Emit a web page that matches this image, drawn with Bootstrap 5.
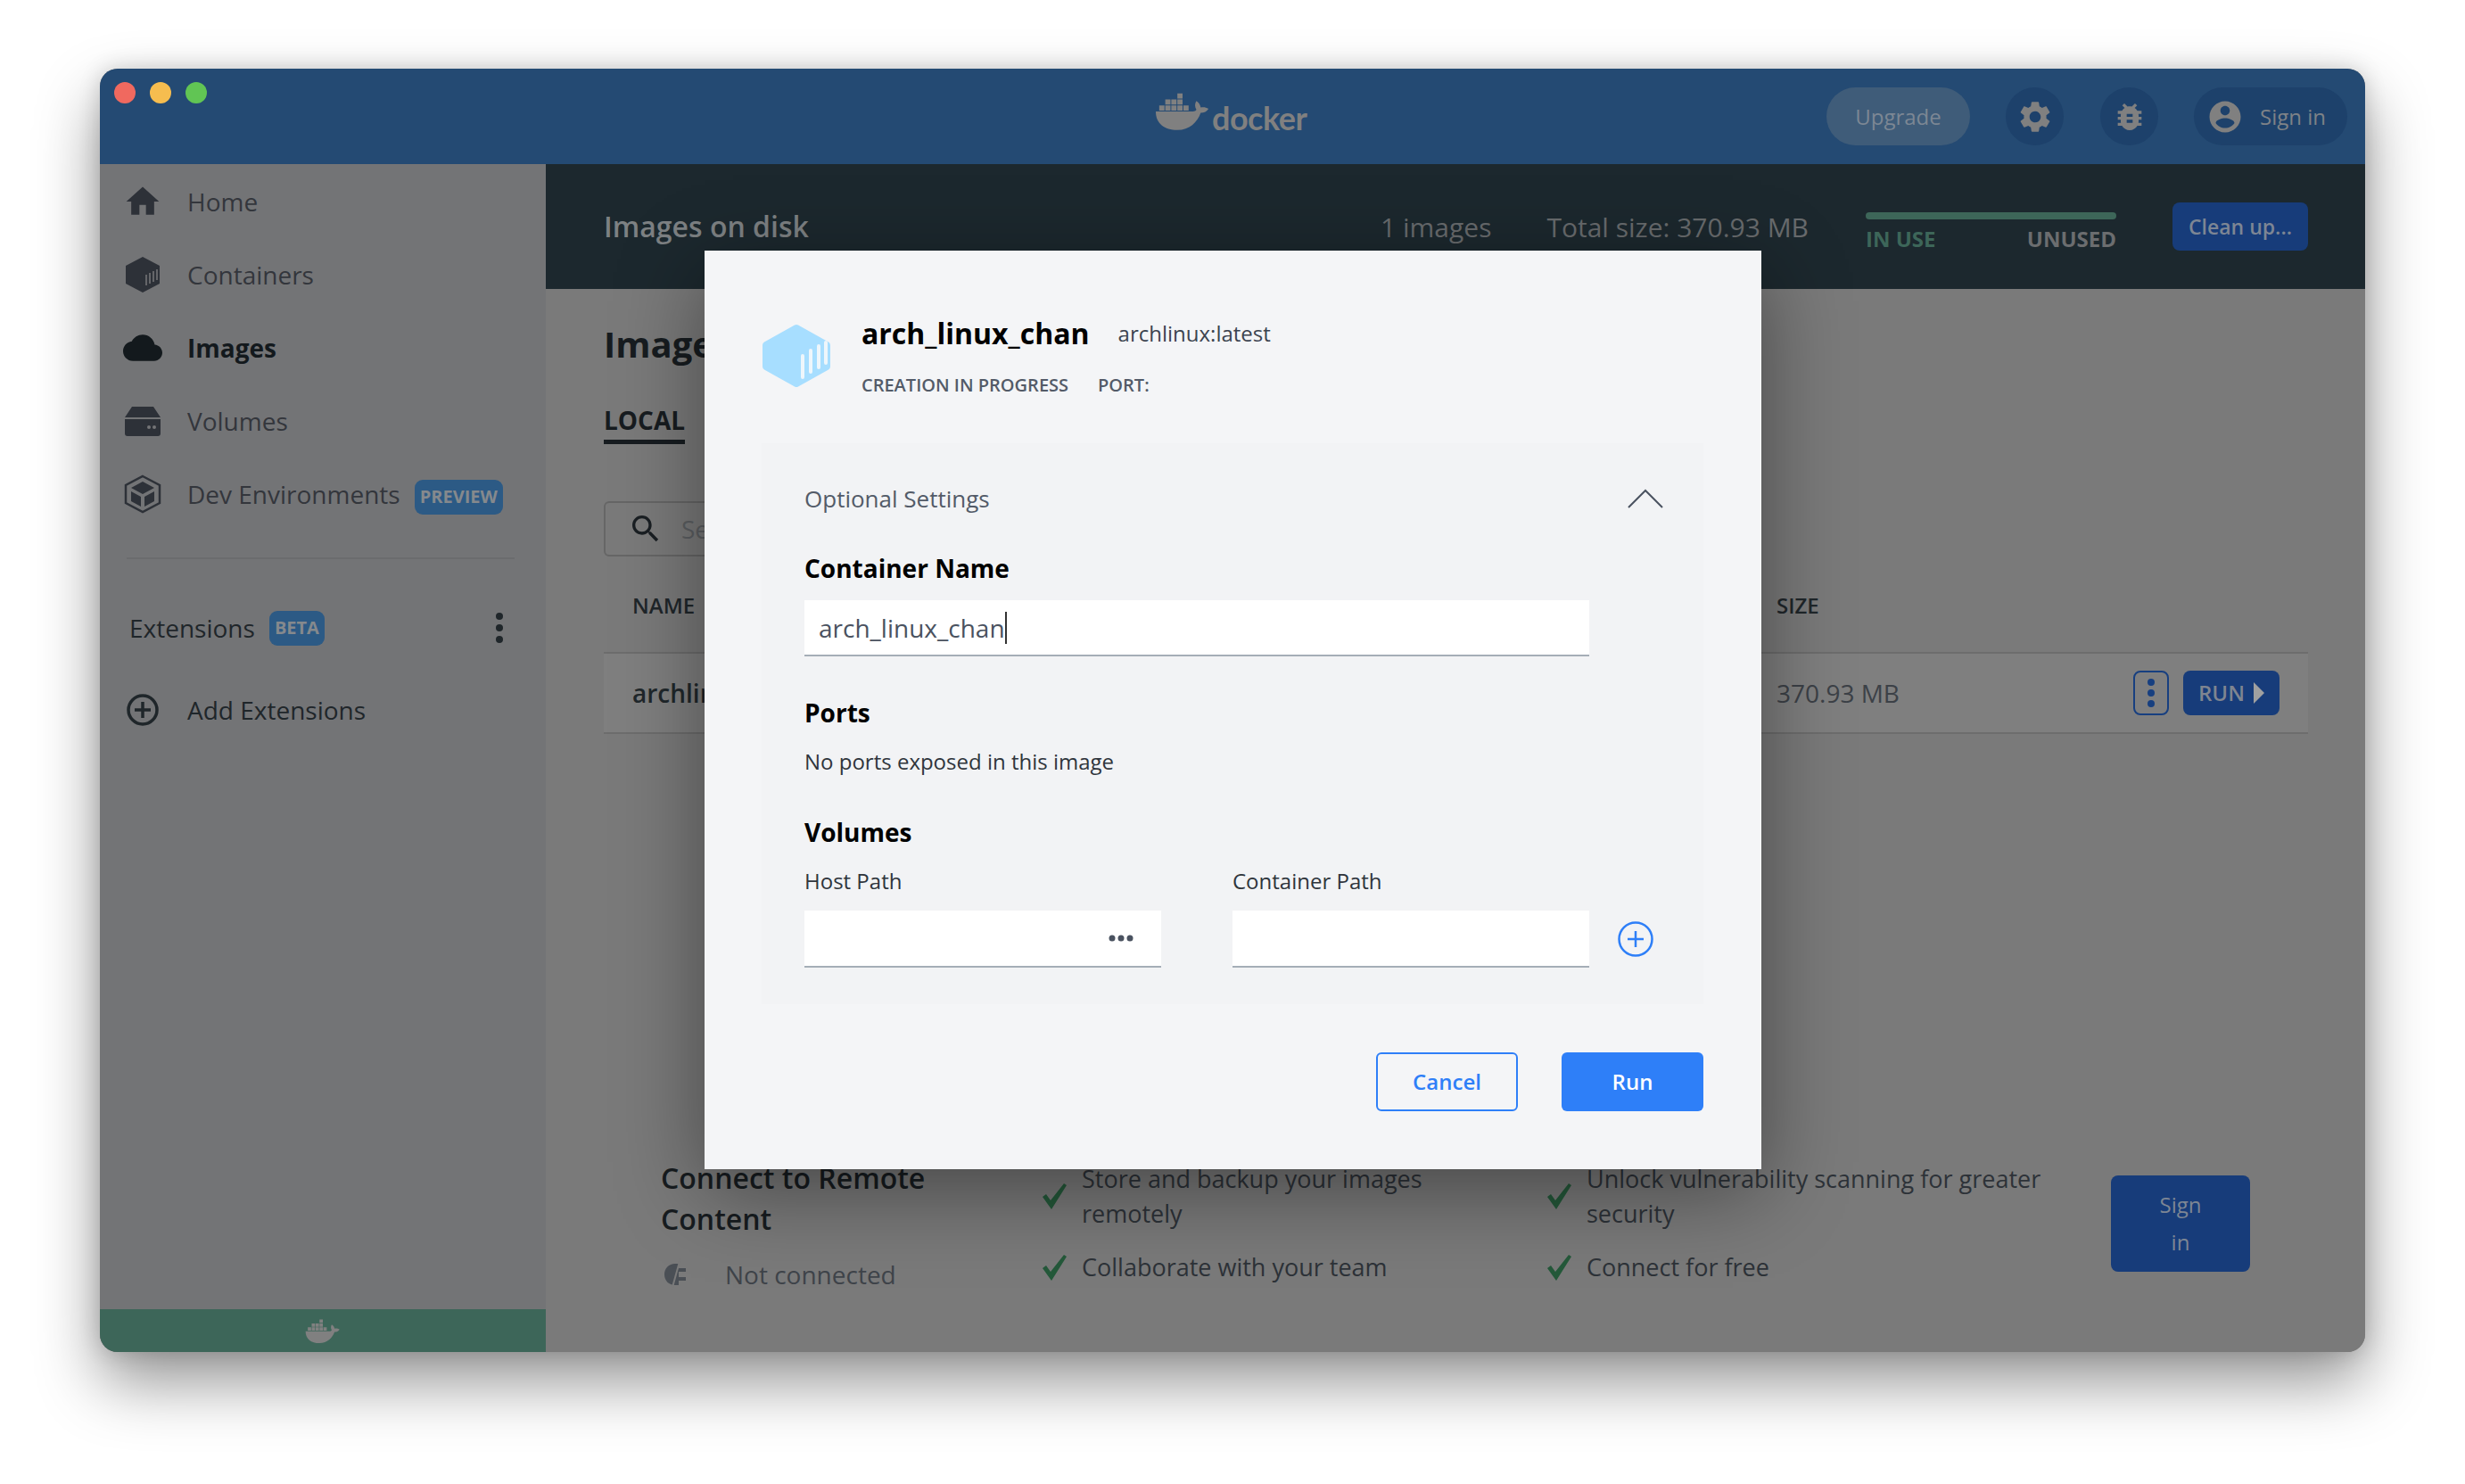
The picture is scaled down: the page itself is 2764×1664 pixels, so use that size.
<!DOCTYPE html>
<html lang="en">
<head>
  <meta charset="UTF-8" />
  <title>Docker Desktop</title>
  <link href="https://cdn.jsdelivr.net/npm/bootstrap@5.3.3/dist/css/bootstrap.min.css" rel="stylesheet">
  <style>
    body { background: #fff; font-family: "Open Sans", sans-serif; margin: 0; width: 2764px; height: 1664px; overflow: hidden; padding: 77px 112px 0; }
    .app-window { position: relative; width: 2540px; height: 1439px; border-radius: 20px; overflow: visible; box-shadow: 0 34px 70px rgba(0,0,0,.42), 0 0 24px rgba(0,0,0,.16); background: #7a7a7a; }
    .app-clip { width: 100%; height: 100%; border-radius: 20px; overflow: hidden; display: flex; flex-direction: column; }

    .top-strip { height: 107px; background: #244a73; padding-right: 20px; position: relative; flex: none; }
    .traffic { position: absolute; left: 16px; top: 15px; gap: 16px; }
    .traffic span { width: 24px; height: 24px; border-radius: 50%; display: block; }
    .logo-wrap { position: absolute; left: 1183px; top: 24px; color: #808080; gap: 2px; }
    .logo-text { font-family: "Lato", sans-serif; font-size: 36px; font-weight: 700; line-height: 1; letter-spacing: -.5px; margin-top: 13px; }
    .pill-btn { height: 65px; border-radius: 33px; background: #1d416b; color: #7e8287; font-size: 24px; gap: 18px; }
    .pill-upgrade { width: 161px; background: #3f5c79; color: #7c8794; }
    .pill-round { width: 65px; }
    .pill-sign { width: 172px; padding-left: 14px; }

    .side-col { width: 500px; background: #737476; flex: none; display: flex; flex-direction: column; padding-top: 1px; }
    .side-item { height: 82px; padding-left: 26px; color: #33363c; font-size: 28px; }
    .side-item svg { width: 44px; height: 44px; margin-right: 28px; flex: none; }
    .side-item.is-on { color: #13191d; font-weight: 700; }
    .tag-blue { background: #2c5a85; color: #85898d; font-weight: 700; font-size: 20px; border-radius: 9px; height: 39px; padding: 0 6px; display: inline-flex; align-items: center; margin-left: 16px; }
    .tag-low { position: relative; top: 3px; }
    .side-rule { height: 2px; background: #6b6c6e; margin: 30px 35px 0 30px; }
    .ext-row { height: 60px; margin-top: 47px; padding: 0 47px 0 33px; color: #1f262a; font-size: 28px; }
    .add-row { height: 60px; margin-top: 32px; padding-left: 26px; color: #1f262a; font-size: 28px; }
    .add-row svg { width: 44px; height: 44px; margin-right: 28px; }
    .green-foot { height: 48px; background: #3d6659; margin-top: auto; flex: none; }

    .main-col { background: #7a7a7a; min-width: 0; position: relative; }
    .disk-head { height: 140px; background: #1c282e; padding: 0 64px 0 65px; flex: none; color: #686b6d; font-size: 30px; }
    .disk-title { color: #7d8183; font-size: 32px; font-weight: 600; }
    .disk-meter { width: 281px; margin: 14px 63px 0 64px; }
    .disk-bar { height: 8px; border-radius: 4px; background: #3d6659; margin-bottom: 6px; }
    .disk-labels { font-size: 24px; font-weight: 700; line-height: 32px; color: #6b6d6f; }
    .btn-cleanup { width: 152px; height: 54px; padding: 0; background: #173c7a; border: 0; border-radius: 8px; color: #7d8694; font-size: 23px; font-weight: 600; }
    .main-body { padding: 0 64px 0 65px; }
    .page-title { font-size: 40px; font-weight: 700; color: #171c20; line-height: 54px; margin: 35px 0 0; }
    .local-tab { display: inline-block; font-size: 28px; font-weight: 700; color: #171c20; line-height: 38px; margin-top: 39px; padding-bottom: 3px; border-bottom: 5px solid #171c20; }
    .search-box { width: 620px; height: 62px; margin-top: 64px; border: 2px solid #666; border-radius: 6px; padding-left: 25px; color: #5c5f62; font-size: 28px; gap: 20px; }
    .col-heads { height: 109px; padding: 2px 0 0 32px; color: #1f262a; font-weight: 600; font-size: 24px; border-bottom: 2px solid #6d6d6d; position: relative; }
    .img-row { height: 90px; background: #7f7f7f; border-bottom: 2px solid #6d6d6d; padding-left: 32px; color: #20272b; font-size: 28px; font-weight: 600; position: relative; }
    .at-size { position: absolute; left: 1315px; }
    .img-row .at-size { color: #3c4147; font-weight: 400; }
    .row-actions { position: absolute; right: 32px; gap: 16px; }
    .btn-kebab { width: 40px; height: 50px; padding: 0; border: 2px solid #173f80; border-radius: 8px; background: transparent; color: #173f80; }
    .btn-rowrun { width: 108px; height: 50px; padding: 0; border: 0; border-radius: 8px; background: #173c7a; color: #7f8590; font-size: 24px; font-weight: 600; gap: 10px; }
    .promo { position: absolute; left: 65px; top: 1134px; width: 1911px; color: #2d3238; font-size: 27px; }
    .promo-title { font-size: 32px; font-weight: 600; line-height: 46px; color: #171c20; width: 340px; margin: -20px 0 0 64px; }
    .promo-list { position: absolute; top: -16px; width: 564px; line-height: 39px; }
    .promo-list.is-narrow { width: 440px; }
    .promo-check { display: flex; gap: 14px; align-items: center; margin-bottom: 21px; }
    .promo-check svg { flex: none; width: 34px; height: 34px; }
    .promo-conn { color: #3f444a; font-size: 28px; margin: 18px 0 0 64px; gap: 36px; }
    .btn-signbig { position: absolute; left: 1690px; top: 0; width: 156px; height: 108px; padding: 0; background: #173c7a; border: 0; border-radius: 8px; color: #7d8694; font-size: 24px; line-height: 42px; }

    .run-dialog { position: absolute; left: 678px; top: 204px; width: 1185px; height: 1030px; background: #f4f5f7; box-shadow: 0 24px 90px rgba(0,0,0,.42); padding: 71px 65px 0 64px; color: #000; }
    .dlg-hex { width: 80px; height: 72px; margin: 0 33px 0 -1px; flex: none; }
    .dlg-name { font-size: 32px; font-weight: 700; line-height: 44px; }
    .dlg-image { font-size: 24px; color: #3c4450; margin-left: 32px; }
    .dlg-sub { font-size: 20px; font-weight: 600; color: #535b68; line-height: 28px; margin-top: 22px; gap: 33px; }
    .opt-panel { height: 629px; margin-top: 51px; background: #f2f3f5; padding: 38px 44px 0 48px; }
    .opt-head { color: #535b68; font-size: 26px; line-height: 48px; }
    .opt-label { font-size: 28px; font-weight: 700; line-height: 38px; color: #000; }
    .flat-input { background: #fff; border: 0; border-bottom: 2px solid #a5aeb7; border-radius: 0; height: 63px; font-size: 28px; color: #4a5260; padding: 0 16px; box-shadow: none; }
    .caret-mark { display: inline-block; width: 2px; height: 36px; background: #333; vertical-align: middle; }
    .dlg-text { font-size: 24px; color: #2f353c; line-height: 32px; }
    .btn-cancel, .btn-go { width: 159px; height: 66px; padding: 0; border-radius: 6px; font-size: 24px; font-weight: 600; }
    .btn-cancel { background: transparent; border: 2px solid #2e7ff8; color: #2e7ff8; margin-right: 49px; }
    .btn-go { background: #2e7ff8; border: 0; color: #fff; }
    .dlg-foot { margin-top: 54px; }
  </style>
</head>
<body>
  <svg width="0" height="0" class="position-absolute">
    <symbol id="whale" viewBox="0 0 64 46">
      <path fill="currentColor" d="M5 17h6v6H5zM12 17h6v6h-6zM19 17h6v6h-6zM26 17h6v6h-6zM33 17h6v6h-6zM12 10h6v6h-6zM19 10h6v6h-6zM26 10h6v6h-6zM26 3h6v6h-6z"/>
      <path fill="currentColor" d="M1 24h43c2 0 3-.5 4-2-2-3-2-7 0-10 3 2 4.500 4.500 5 7.500 3-1 6-.5 9 1.500-2 3.500-5 4.500-9 4.500-4 11-13 20-27 20C11 45.500 1 38 1 24z"/>
    </symbol>
  </svg>

  <div class="app-window">
    <div class="app-clip">
      <!-- title bar -->
      <div class="top-strip d-flex align-items-center justify-content-end">
        <div class="traffic d-flex">
          <span style="background:#f0695f"></span><span style="background:#f6bd4f"></span><span style="background:#61c554"></span>
        </div>
        <div class="logo-wrap d-flex">
          <svg width="62" height="46"><use href="#whale"/></svg>
          <span class="logo-text">docker</span>
        </div>
        <div class="pill-btn pill-upgrade d-flex align-items-center justify-content-center me-4 ms-0">Upgrade</div>
        <div class="pill-btn pill-round d-flex align-items-center justify-content-center" style="margin-right:41px;margin-left:16px">
          <svg width="42" height="42" viewBox="0 0 24 24" fill="#808080"><path d="M19.14 12.94c.04-.3.06-.61.06-.94 0-.32-.02-.64-.07-.94l2.03-1.58c.18-.14.23-.41.12-.61l-1.92-3.32c-.12-.22-.37-.29-.59-.22l-2.39.96c-.5-.38-1.03-.7-1.62-.94l-.36-2.54c-.04-.24-.24-.41-.48-.41h-3.84c-.24 0-.43.17-.47.41l-.36 2.54c-.59.24-1.13.57-1.62.94l-2.39-.96c-.22-.08-.47 0-.59.22L2.74 8.87c-.12.21-.08.47.12.61l2.03 1.58c-.05.3-.09.63-.09.94s.02.64.07.94l-2.03 1.58c-.18.14-.23.41-.12.61l1.92 3.32c.12.22.37.29.59.22l2.39-.96c.5.38 1.03.7 1.62.94l.36 2.54c.05.24.24.41.48.41h3.84c.24 0 .44-.17.47-.41l.36-2.54c.59-.24 1.13-.56 1.62-.94l2.39.96c.22.08.47 0 .59-.22l1.92-3.32c.12-.22.07-.47-.12-.61l-2.01-1.58zM12 15.600c-1.980 0-3.600-1.620-3.600-3.600s1.620-3.600 3.600-3.600 3.600 1.620 3.600 3.600-1.620 3.600-3.600 3.600z"/></svg>
        </div>
        <div class="pill-btn pill-round d-flex align-items-center justify-content-center" style="margin-right:40px">
          <svg width="40" height="40" viewBox="0 0 24 24" fill="#808080"><path d="M20 8h-2.810c-.45-.78-1.070-1.450-1.820-1.960L17 4.410 15.590 3l-2.170 2.170C12.960 5.060 12.490 5 12 5c-.49 0-.96.06-1.410.17L8.410 3 7 4.410l1.620 1.630C7.880 6.550 7.260 7.220 6.810 8H4v2h2.090c-.05.33-.09.66-.09 1v1H4v2h2v1c0 .34.04.67.09 1H4v2h2.810c1.040 1.790 2.970 3 5.190 3s4.150-1.210 5.190-3H20v-2h-2.090c.05-.33.09-.66.09-1v-1h2v-2h-2v-1c0-.34-.04-.67-.09-1H20V8zm-6 8h-4v-2h4v2zm0-4h-4v-2h4v2z"/></svg>
        </div>
        <div class="pill-btn pill-sign d-flex align-items-center">
          <svg width="42" height="42" viewBox="0 0 24 24" fill="#808080"><path d="M12 2C6.480 2 2 6.480 2 12s4.480 10 10 10 10-4.480 10-10S17.520 2 12 2zm0 3c1.660 0 3 1.340 3 3s-1.340 3-3 3-3-1.340-3-3 1.340-3 3-3zm0 14.200c-2.500 0-4.710-1.280-6-3.220.03-1.990 4-3.080 6-3.080 1.990 0 5.970 1.090 6 3.080-1.290 1.940-3.500 3.220-6 3.220z"/></svg>
          <span>Sign in</span>
        </div>
      </div>

      <div class="d-flex flex-grow-1" style="min-height:0">
        <!-- sidebar -->
        <div class="side-col">
          <div class="side-item d-flex align-items-center">
            <svg viewBox="0 0 24 24" fill="#2d3138"><path d="M10 20v-6h4v6h5v-8h3L12 3 2 12h3v8z"/></svg>Home
          </div>
          <div class="side-item d-flex align-items-center">
            <svg viewBox="0 0 44 44"><path fill="#2d3138" d="M22 2l19 10v20L22 42 3 32V12z"/><path stroke="#737476" stroke-width="1.600" d="M26 34V22M30 32V20M34 30V18M38 28V16"/></svg>Containers
          </div>
          <div class="side-item is-on d-flex align-items-center">
            <svg viewBox="0 0 24 24" fill="#13191d"><path d="M19.350 10.040C18.670 6.590 15.640 4 12 4 9.110 4 6.600 5.640 5.350 8.040 2.340 8.360 0 10.910 0 14c0 3.310 2.690 6 6 6h13c2.760 0 5-2.240 5-5 0-2.640-2.050-4.780-4.650-4.960z"/></svg>Images
          </div>
          <div class="side-item d-flex align-items-center">
            <svg viewBox="0 0 44 44"><path fill="#2d3138" d="M10 6h24l8 12H2zM2 20h40v16a3 3 0 0 1-3 3H5a3 3 0 0 1-3-3z"/><circle cx="29" cy="29" r="2" fill="#737476"/><circle cx="35" cy="29" r="2" fill="#737476"/></svg>Volumes
          </div>
          <div class="side-item d-flex align-items-center">
            <svg viewBox="0 0 44 44" fill="none" stroke="#2d3138" stroke-width="2.500"><path d="M22 2l19 10v20L22 42 3 32V12z"/><path fill="#2d3138" stroke="none" d="M22 8l13 7-13 7-13-7zM9 19l11 6v11l-11-6zM35 19l-11 6v11l11-6z"/></svg>Dev Environments<span class="tag-blue tag-low">PREVIEW</span>
          </div>
          <div class="side-rule"></div>
          <div class="ext-row d-flex align-items-center">
            <span>Extensions</span><span class="tag-blue">BETA</span>
            <svg class="ms-auto" width="10" height="40" viewBox="0 0 10 40" fill="#1f262a"><circle cx="5" cy="7" r="4"/><circle cx="5" cy="20" r="4"/><circle cx="5" cy="33" r="4"/></svg>
          </div>
          <div class="add-row d-flex align-items-center">
            <svg viewBox="0 0 44 44" fill="none" stroke="#1f262a" stroke-width="3.500"><circle cx="22" cy="22" r="16"/><path d="M22 13v18M13 22h18"/></svg>Add Extensions
          </div>
          <div class="green-foot d-flex align-items-center justify-content-center" style="color:#808080">
            <svg width="40" height="30"><use href="#whale"/></svg>
          </div>
        </div>

        <!-- main area -->
        <div class="main-col flex-grow-1">
          <div class="disk-head d-flex align-items-center">
            <span class="disk-title">Images on disk</span>
            <span class="ms-auto">1 images</span>
            <span style="margin-left:62px">Total size: 370.93 MB</span>
            <div class="disk-meter">
              <div class="disk-bar"></div>
              <div class="disk-labels d-flex justify-content-between"><span style="color:#3d6659">IN USE</span><span>UNUSED</span></div>
            </div>
            <button class="btn btn-cleanup">Clean up...</button>
          </div>
          <div class="main-body">
            <h1 class="page-title">Images</h1>
            <div><span class="local-tab">LOCAL</span></div>
            <div class="search-box d-flex align-items-center">
              <svg width="40" height="40" viewBox="0 0 24 24" fill="#1a1f23"><path d="M15.500 14h-.79l-.28-.27C15.410 12.590 16 11.110 16 9.500 16 5.910 13.090 3 9.500 3S3 5.910 3 9.500 5.910 16 9.500 16c1.610 0 3.090-.59 4.230-1.570l.27.28v.79l5 4.990L20.490 19l-4.990-5zm-6 0C7.010 14 5 11.990 5 9.500S7.010 5 9.500 5 14 7.010 14 9.500 11.990 14 9.500 14z"/></svg>
              <span>Search</span>
            </div>
            <div class="col-heads d-flex align-items-center">NAME<span class="at-size">SIZE</span></div>
            <div class="img-row d-flex align-items-center">archlinux<span class="at-size">370.93 MB</span>
              <div class="row-actions d-flex">
                <button class="btn btn-kebab"><svg width="10" height="34" viewBox="0 0 10 34" fill="#173f80"><circle cx="5" cy="5" r="4"/><circle cx="5" cy="17" r="4"/><circle cx="5" cy="29" r="4"/></svg></button>
                <button class="btn btn-rowrun d-flex align-items-center justify-content-center">RUN<svg width="12" height="24" viewBox="0 0 12 24" fill="#a0a0a0"><path d="M0 0l12 12L0 24z"/></svg></button>
              </div>
            </div>
          </div>

          <!-- promo strip, partly under the dialog -->
          <div class="promo">
            <div class="promo-title">Connect to Remote Content</div>
            <div class="promo-conn d-flex align-items-center">
              <svg width="36" height="36" viewBox="0 0 36 36"><path fill="#4a4f55" d="M16 6h4v5h8v4h-8v6h8v4h-8v5h-4c-7 0-12-5-12-12S9 6 16 6z"/><path stroke="#7a7a7a" stroke-width="2" d="M22 0L12 36"/></svg>
              <span>Not connected</span>
            </div>
            <div class="promo-list is-narrow" style="left:488px">
              <div class="promo-check"><svg viewBox="0 0 34 34"><path fill="#24593a" d="M4 18l4-3 5 7L28 3l3 2-17 27z"/></svg><span>Store and backup your images remotely</span></div>
              <div class="promo-check"><svg viewBox="0 0 34 34"><path fill="#24593a" d="M4 18l4-3 5 7L28 3l3 2-17 27z"/></svg><span>Collaborate with your team</span></div>
            </div>
            <div class="promo-list" style="left:1054px">
              <div class="promo-check"><svg viewBox="0 0 34 34"><path fill="#24593a" d="M4 18l4-3 5 7L28 3l3 2-17 27z"/></svg><span>Unlock vulnerability scanning for greater security</span></div>
              <div class="promo-check"><svg viewBox="0 0 34 34"><path fill="#24593a" d="M4 18l4-3 5 7L28 3l3 2-17 27z"/></svg><span>Connect for free</span></div>
            </div>
            <button class="btn btn-signbig">Sign<br>in</button>
          </div>
        </div>
      </div>
    </div>

    <!-- run dialog -->
    <div class="run-dialog">
      <div class="d-flex align-items-center">
        <svg class="dlg-hex" viewBox="0 0 80 72"><path fill="#a7deff" d="M38 1.500a4 4 0 0 1 4 0l34 19a4 4 0 0 1 2 3.500v24a4 4 0 0 1-2 3.500l-34 19a4 4 0 0 1-4 0l-34-19a4 4 0 0 1-2-3.500V24a4 4 0 0 1 2-3.500z"/><path stroke="#eef6fb" stroke-width="4" stroke-linecap="round" d="M47 60V36M56 54V30M65 49V25M73 44V21"/></svg>
        <div>
          <div class="d-flex align-items-center"><span class="dlg-name">arch_linux_chan</span><span class="dlg-image">archlinux:latest</span></div>
          <div class="dlg-sub d-flex"><span>CREATION IN PROGRESS</span><span>PORT:</span></div>
        </div>
      </div>

      <div class="opt-panel">
        <div class="opt-head d-flex align-items-center justify-content-between">
          <span>Optional Settings</span>
          <svg width="42" height="24" viewBox="0 0 42 24" fill="none" stroke="#4a5260" stroke-width="2"><path d="M2 22L21 3l19 19"/></svg>
        </div>
        <div class="opt-label" style="margin-top:35px">Container Name</div>
        <div class="flat-input d-flex align-items-center" style="width:880px;margin-top:17px">arch_linux_chan<span class="caret-mark"></span></div>
        <div class="opt-label" style="margin-top:44px">Ports</div>
        <div class="dlg-text" style="margin-top:20px">No ports exposed in this image</div>
        <div class="opt-label" style="margin-top:44px">Volumes</div>
        <div class="dlg-text d-flex" style="margin-top:20px"><span style="width:480px">Host Path</span><span>Container Path</span></div>
        <div class="d-flex align-items-center" style="margin-top:17px">
          <div class="flat-input d-flex align-items-center justify-content-end" style="width:400px;height:64px">
            <svg width="30" height="10" viewBox="0 0 30 10" fill="#4a5260" style="margin-right:14px"><circle cx="5" cy="5" r="3.500"/><circle cx="15" cy="5" r="3.500"/><circle cx="25" cy="5" r="3.500"/></svg>
          </div>
          <div class="flat-input" style="width:400px;height:64px;margin-left:80px"></div>
          <svg style="margin-left:32px" width="40" height="40" viewBox="0 0 40 40" fill="none" stroke="#2e7ff8" stroke-width="2.500"><circle cx="20" cy="20" r="18.500"/><path d="M20 11v18M11 20h18"/></svg>
        </div>
      </div>

      <div class="dlg-foot d-flex justify-content-end">
        <button class="btn btn-cancel">Cancel</button>
        <button class="btn btn-go">Run</button>
      </div>
    </div>
  </div>
  <script src="https://cdn.jsdelivr.net/npm/bootstrap@5.3.3/dist/js/bootstrap.bundle.min.js"></script>
</body>
</html>
